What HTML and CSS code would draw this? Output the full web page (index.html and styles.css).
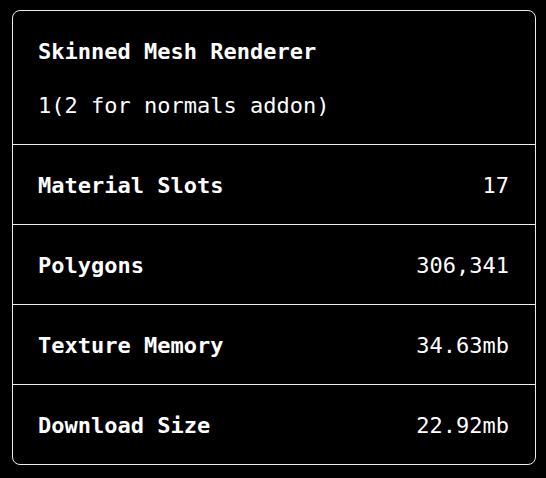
FILE: index.html
```html
<!DOCTYPE html>
<html>
<head>
<meta charset="utf-8">
<link rel="stylesheet" href="styles.css">
</head>
<body>
<div class="card">
  <div class="header">
    <div class="title">Skinned Mesh Renderer</div>
    <div class="subtitle">1(2 for normals addon)</div>
  </div>
  <div class="row"><span class="label">Material Slots</span><span class="value">17</span></div>
  <div class="row"><span class="label">Polygons</span><span class="value">306,341</span></div>
  <div class="row"><span class="label">Texture Memory</span><span class="value">34.63mb</span></div>
  <div class="row"><span class="label">Download Size</span><span class="value">22.92mb</span></div>
</div>
</body>
</html>
```
FILE: styles.css
```css
html, body {
  margin: 0;
  background: #000;
}
body {
  padding: 10px 10px 10px 12px;
  font-family: "DejaVu Sans Mono", "Liberation Mono", monospace;
  font-size: 22px;
  line-height: 33px;
  color: #fff;
}
.card {
  width: 524px;
  box-sizing: border-box;
  border: 1px solid #ececec;
  border-radius: 8px;
}
.header {
  padding: 24px 25px 22px;
}
.title {
  font-weight: bold;
  margin-bottom: 21px;
}
.row {
  display: flex;
  justify-content: space-between;
  padding: 24px 26px 22px 25px;
  border-top: 1px solid #ececec;
}
.label {
  font-weight: bold;
}
```
